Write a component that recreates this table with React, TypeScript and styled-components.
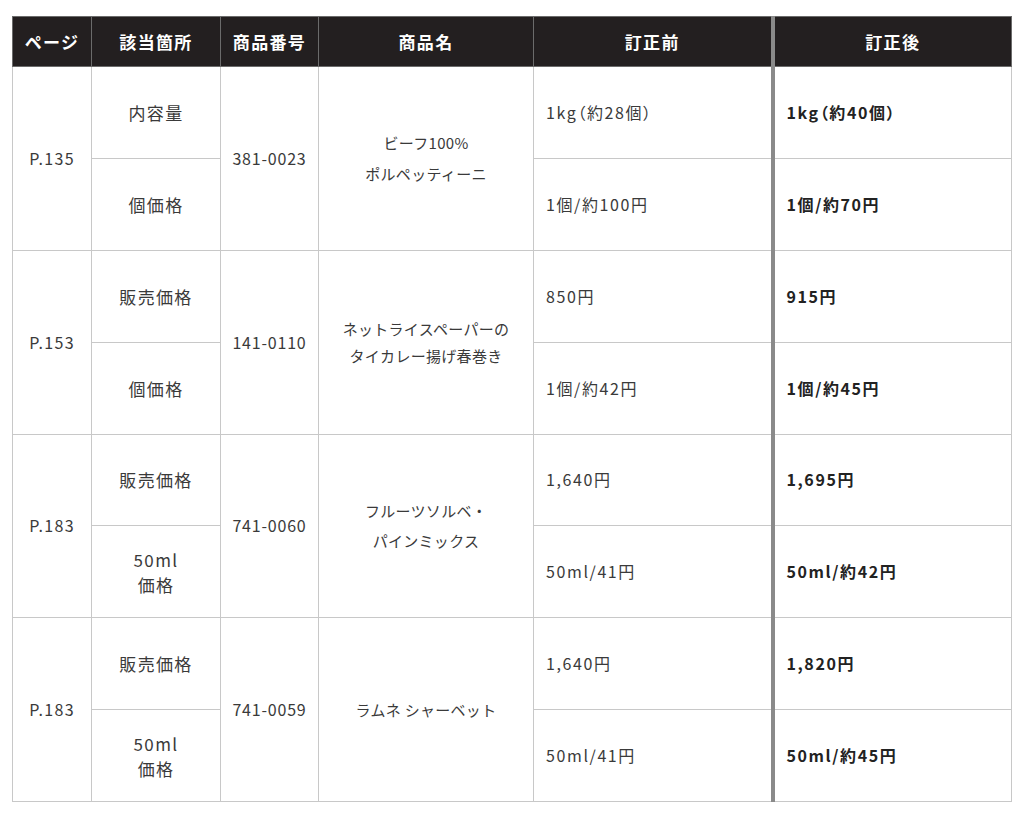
import styled, { createGlobalStyle } from 'styled-components';

const GlobalStyle = createGlobalStyle`
  html, body {
    margin: 0;
    padding: 0;
    background: #ffffff;
  }
  body {
    font-family: "Noto Sans CJK JP", "Noto Sans", sans-serif;
    color: #333333;
  }
`;

type Entry = {
  page: string;
  code: string;
  name: string[];
  nameLine: number;
  items: { label: string[]; before: string; after: string }[];
};

const rows: Entry[] = [
  {
    page: 'P.135',
    code: '381-0023',
    name: ['ビーフ100%', 'ポルペッティーニ'],
    nameLine: 31,
    items: [
      { label: ['内容量'], before: '1kg（約28個）', after: '1kg（約40個）' },
      { label: ['個価格'], before: '1個/約100円', after: '1個/約70円' },
    ],
  },
  {
    page: 'P.153',
    code: '141-0110',
    name: ['ネットライスペーパーの', 'タイカレー揚げ春巻き'],
    nameLine: 27,
    items: [
      { label: ['販売価格'], before: '850円', after: '915円' },
      { label: ['個価格'], before: '1個/約42円', after: '1個/約45円' },
    ],
  },
  {
    page: 'P.183',
    code: '741-0060',
    name: ['フルーツソルベ・', 'パインミックス'],
    nameLine: 30,
    items: [
      { label: ['販売価格'], before: '1,640円', after: '1,695円' },
      { label: ['50ml', '価格'], before: '50ml/41円', after: '50ml/約42円' },
    ],
  },
  {
    page: 'P.183',
    code: '741-0059',
    name: ['ラムネ シャーベット'],
    nameLine: 30,
    items: [
      { label: ['販売価格'], before: '1,640円', after: '1,820円' },
      { label: ['50ml', '価格'], before: '50ml/41円', after: '50ml/約45円' },
    ],
  },
];

const Page = styled.div`
  padding: 16px 12px 12px 12px;
`;

const Table = styled.table`
  width: 999px;
  border-collapse: collapse;
  table-layout: fixed;
  border: 1px solid #c4c4c4;
`;

const HeadRow = styled.tr`
  height: 50px;
  background: #231f20;
`;

const HeadCell = styled.th<{ $divider?: boolean }>`
  color: #ffffff;
  font-size: 17px;
  font-weight: 700;
  letter-spacing: 0.08em;
  text-align: center;
  vertical-align: middle;
  padding: 0;
  border: 1px solid #6b6b6b;
  border-left: ${(p) => (p.$divider ? '4px solid #8a8a8a' : '1px solid #6b6b6b')};
`;

const BodyRow = styled.tr`
  height: 91.875px;
`;

const Cell = styled.td<{
  $align?: 'left' | 'center';
  $divider?: boolean;
  $strong?: boolean;
  $spacing?: number;
}>`
  border: 1px solid #c8c8c8;
  border-left: ${(p) => (p.$divider ? '4px solid #8a8a8a' : '1px solid #c8c8c8')};
  padding: ${(p) => (p.$align === 'left' ? '0 0 0 12px' : '0')};
  text-align: ${(p) => p.$align ?? 'center'};
  vertical-align: middle;
  font-size: 16px;
  letter-spacing: ${(p) => p.$spacing ?? 0.1}em;
  font-feature-settings: ${(p) => (p.$align === 'left' ? '"palt"' : 'normal')};
  font-weight: ${(p) => (p.$strong ? 700 : 400)};
  color: ${(p) => (p.$strong ? '#222222' : '#3a3a3a')};
  line-height: 25px;
`;

const LabelCell = styled(Cell)`
  font-size: 17px;
  letter-spacing: 0.08em;
`;

const NameCell = styled(Cell)<{ $line: number }>`
  font-size: 15px;
  letter-spacing: 0.02em;
  line-height: ${(p) => p.$line}px;
`;

const Line = styled.span`
  display: block;
`;

export default function App() {
  return (
    <Page>
      <GlobalStyle />
      <Table>
        <colgroup>
          <col style={{ width: 79 }} />
          <col style={{ width: 129 }} />
          <col style={{ width: 98 }} />
          <col style={{ width: 215 }} />
          <col style={{ width: 239 }} />
          <col style={{ width: 239 }} />
        </colgroup>
        <thead>
          <HeadRow>
            <HeadCell>ページ</HeadCell>
            <HeadCell>該当箇所</HeadCell>
            <HeadCell>商品番号</HeadCell>
            <HeadCell>商品名</HeadCell>
            <HeadCell>訂正前</HeadCell>
            <HeadCell $divider>訂正後</HeadCell>
          </HeadRow>
        </thead>
        <tbody>
          {rows.map((r, gi) =>
            r.items.map((it, ii) => (
              <BodyRow key={`${gi}-${ii}`}>
                {ii === 0 && (
                  <Cell rowSpan={r.items.length} $spacing={0.08}>
                    {r.page}
                  </Cell>
                )}
                <LabelCell>
                  {it.label.map((l) => (
                    <Line key={l}>{l}</Line>
                  ))}
                </LabelCell>
                {ii === 0 && (
                  <Cell rowSpan={r.items.length} $spacing={0.05}>
                    {r.code}
                  </Cell>
                )}
                {ii === 0 && (
                  <NameCell rowSpan={r.items.length} $line={r.nameLine}>
                    {r.name.map((n) => (
                      <Line key={n}>{n}</Line>
                    ))}
                  </NameCell>
                )}
                <Cell $align="left">{it.before}</Cell>
                <Cell $align="left" $divider $strong>
                  {it.after}
                </Cell>
              </BodyRow>
            ))
          )}
        </tbody>
      </Table>
    </Page>
  );
}
